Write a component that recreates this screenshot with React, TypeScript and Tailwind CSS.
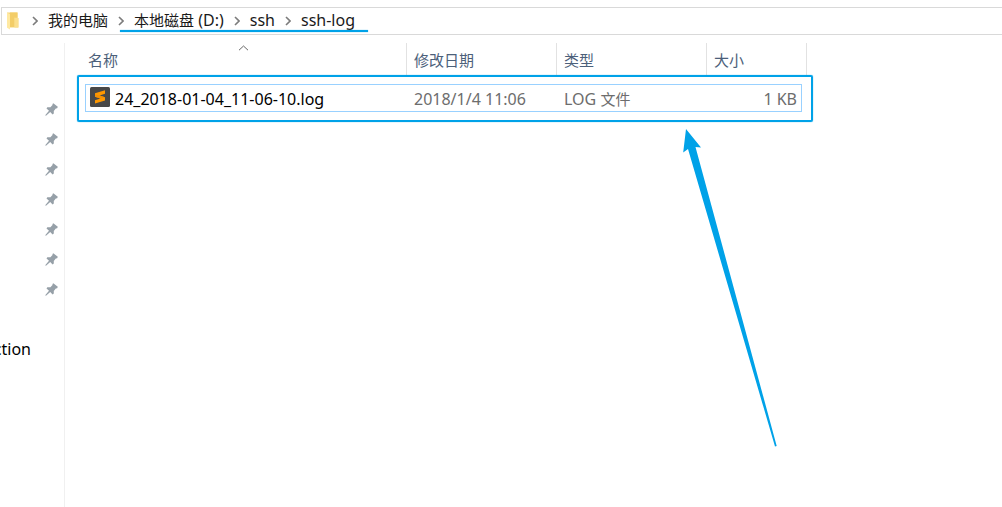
import { Fragment } from "react";

const crumbs = [
  { cjk: "我的电脑", latin: "" },
  { cjk: "本地磁盘", latin: " (D:)" },
  { cjk: "", latin: "ssh" },
  { cjk: "", latin: "ssh-log" },
];

const pins = ["p1", "p2", "p3", "p4", "p5", "p6", "p7"];

function FolderIcon() {
  return (
    <svg width="14" height="18" viewBox="0 0 14 18" aria-hidden="true">
      <path d="M1 .5h10.5v5l.9.7V15.5H3z" fill="#f6d67b" />
      <path d="M4 .5h7.5v5H8V15H4z" fill="#f3cd68" />
      <path d="M8.5 6h3.9v9.5H8.5z" fill="#fbdf8d" />
      <path d="M1 .5l3 1.8v15.2L1 15.8z" fill="#ffe9a2" />
    </svg>
  );
}

function Chevron() {
  return (
    <svg width="6" height="10" viewBox="0 0 6 10" fill="none" aria-hidden="true">
      <path d="M1 1l4 4-4 4" stroke="#7c7c7c" strokeWidth="1.6" />
    </svg>
  );
}

function PinIcon() {
  return (
    <svg width="13" height="13" viewBox="0 0 13 13" aria-hidden="true">
      <path
        d="M8.3.2L12.8 3.8 12.2 5.2 10.8 5.5 8.8 8v2.6l-1.2.9L5.2 9 1 12.8.2 12.2 4 7.8 1.5 5.4l.8-1.2H5.4L7.5 2.1V.9z"
        fill="#96a0a8"
      />
    </svg>
  );
}

function SublimeIcon() {
  return (
    <svg width="20" height="20" viewBox="0 0 20 20" aria-hidden="true">
      <rect width="20" height="20" rx="1.5" fill="#484848" />
      <path d="M15 3.2v3.6L9.6 8.5 15 10.2v3.4L5 16.6v-3.4l5.4-1.8L5 9.7V6.3z" fill="#ff9800" />
      <path d="M5 9.7l5.4 1.7L15 10.2 9.6 8.5 5 7.6z" fill="#f29005" />
    </svg>
  );
}

export default function App() {
  return (
    <div className="flex min-h-screen flex-col overflow-hidden bg-white font-['Noto_Sans','Noto_Sans_CJK_SC',sans-serif] text-base text-black">
      <nav
        aria-label="路径"
        className="mt-[7px] ml-px flex h-7 items-center border border-r-0 border-[#d9d9d9] pl-1"
      >
        <FolderIcon />
        <ol className="ml-3 flex h-full items-center gap-[10px]">
          {crumbs.map((crumb) => (
            <Fragment key={crumb.cjk + crumb.latin}>
              <li>
                <Chevron />
              </li>
              <li>
                <a href="#" className="block pb-0.5 leading-6 whitespace-pre text-[#1a1a1a]">
                  <span className="text-[15px]">{crumb.cjk}</span>
                  {crumb.latin}
                </a>
              </li>
            </Fragment>
          ))}
        </ol>
      </nav>

      <div className="mt-2 flex flex-1">
        <aside className="w-[65px] shrink-0 border-r border-[#f0f0f0] pt-[51px]">
          <ul>
            {pins.map((pin) => (
              <li key={pin} className="flex h-[30px] items-center justify-end pr-[6px]">
                <PinIcon />
              </li>
            ))}
          </ul>
          <div className="mt-[30px] flex h-[30px] w-[31px] items-center justify-end overflow-hidden">
            <span>ction</span>
          </div>
        </aside>

        <main className="relative flex-1 pl-5">
          <table className="w-[722px] table-fixed border-separate border-spacing-0 text-left">
            <colgroup>
              <col className="w-[322px]" />
              <col className="w-[150px]" />
              <col className="w-[150px]" />
              <col className="w-[100px]" />
            </colgroup>
            <thead className="text-[15px] text-[#4c607a]">
              <tr className="h-8">
                <th className="relative border-r border-[#e2e2e2] p-0 pt-0.5 pl-[3px] leading-[30px] font-normal">
                  名称
                  <svg
                    className="absolute top-[2px] left-[153px]"
                    width="11"
                    height="6"
                    viewBox="0 0 11 6"
                    fill="none"
                    aria-hidden="true"
                  >
                    <path d="M1 5.2L5.5 1 10 5.2" stroke="#666" />
                  </svg>
                </th>
                <th className="border-r border-[#e2e2e2] p-0 pt-0.5 pl-[7px] leading-[30px] font-normal">修改日期</th>
                <th className="border-r border-[#e2e2e2] p-0 pt-0.5 pl-[7px] leading-[30px] font-normal">类型</th>
                <th className="border-r border-[#e2e2e2] p-0 pt-0.5 pl-[7px] leading-[30px] font-normal">大小</th>
              </tr>
            </thead>
            <tbody className="text-[#6d6d6d]">
              <tr>
                <td className="p-0 pt-[9px]">
                  <div className="flex h-7 items-start gap-[5px] border border-r-0 border-[#99d1ff] pt-0.5 pl-1 leading-6 text-black">
                    <SublimeIcon />
                    <span>24_2018-01-04_11-06-10.log</span>
                  </div>
                </td>
                <td className="p-0 pt-[9px]">
                  <div className="h-7 border-y border-[#99d1ff] pt-0.5 pl-[7px] leading-6">2018/1/4 11:06</div>
                </td>
                <td className="p-0 pt-[9px]">
                  <div className="h-7 border-y border-[#99d1ff] pt-0.5 pl-[7px] leading-6">
                    LOG <span className="text-[15px]">文件</span>
                  </div>
                </td>
                <td className="p-0 pt-[9px]">
                  <div className="mr-[5px] h-7 border border-l-0 border-[#99d1ff] pt-0.5 pr-1 text-right leading-6">
                    1 KB
                  </div>
                </td>
              </tr>
            </tbody>
          </table>
          <div className="pointer-events-none absolute top-8 left-3 h-[47px] w-[736px] rounded-xs border-2 border-[#00a2e8] shadow-[0_0_1px_#00a2e8]" />
          <svg
            className="pointer-events-none absolute top-[86px] left-[617px]"
            width="96"
            height="320"
            viewBox="0 0 96 320"
            aria-hidden="true"
          >
            <path d="M4 0L19 18.5 13.5 18 94.7 317 93 317.5 6 20 1.2 23.5z" fill="#00a2e8" />
          </svg>
        </main>
      </div>
      <div className="pointer-events-none absolute top-[30px] left-[120px] h-[2px] w-[248px] bg-[#00a2e8] shadow-[0_0_1px_#00a2e8]" />
    </div>
  );
}
